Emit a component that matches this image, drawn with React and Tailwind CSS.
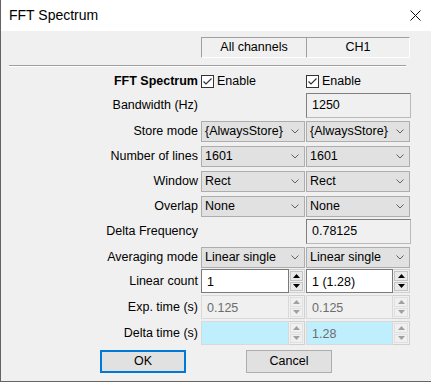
import React from "react";

function Chevron() {
  return (
    <svg width="8" height="5" viewBox="0 0 8 5" className="shrink-0">
      <path d="M0.5 0.5 L4 4 L7.5 0.5" fill="none" stroke="#606060" strokeWidth="1" />
    </svg>
  );
}

function Combo({ value }) {
  return (
    <div className="w-[104px] h-full bg-[#e1e1e1] border border-[#adadad] flex items-center justify-between pl-[3px] pr-[5px]">
      <span className="whitespace-nowrap">{value}</span>
      <Chevron />
    </div>
  );
}

function Check({ label }) {
  return (
    <div className="flex items-center gap-[3px] h-full">
      <div className="w-[13px] h-[13px] bg-white border border-[#333333] flex items-center justify-center">
        <svg width="11" height="11" viewBox="0 0 11 11">
          <path d="M1.5 5.5 L4 8 L9.5 2.5" fill="none" stroke="#333333" strokeWidth="1.2" />
        </svg>
      </div>
      <span>{label}</span>
    </div>
  );
}

function ReadBox({ value }) {
  return (
    <div className="w-[105px] h-full border border-[#7f7f7f] border-r-[#b9b9b9] border-b-[#b9b9b9] pl-[5px] pt-[2px]">
      {value}
    </div>
  );
}

function Arrow({ up, disabled }) {
  return (
    <svg width="7" height="4" viewBox="0 0 7 4">
      <path d={up ? "M0 4 L3.5 0 L7 4 Z" : "M0 0 L3.5 4 L7 0 Z"} fill={disabled ? "#a0a0a0" : "#000000"} />
    </svg>
  );
}

function Spin({ value, state, editW }) {
  const disabled = state !== "on";
  const editCls =
    state === "on"
      ? "bg-white border border-[#7a7a7a] text-black"
      : state === "off"
      ? "bg-[#f0f0f0] border border-[#d9d9d9] text-[#6d6d6d]"
      : "bg-[#bfeffd] border border-[#d9d9d9] text-[#6d6d6d]";
  const btn = disabled ? "border-[#e0e0e0] bg-[#f0f0f0]" : "border-[#c4c4c4] bg-[#e9e9e9]";
  return (
    <div className="flex h-full w-[104px]">
      <div className={`h-full pl-[5px] pt-[3px] ${editCls}`} style={{ width: editW }}>
        {value}
      </div>
      <div className="flex-1 flex flex-col border border-[#d0d0d0] border-l-0 p-px gap-px">
        <div className={`flex-1 flex items-center justify-center border ${btn}`}>
          <Arrow up disabled={disabled} />
        </div>
        <div className={`flex-1 flex items-center justify-center border ${btn}`}>
          <Arrow disabled={disabled} />
        </div>
      </div>
    </div>
  );
}

function Row({ label, bold, className, children }) {
  return (
    <div className={`grid grid-cols-[200px_105px_105px] ${className}`}>
      <div className={`flex items-center justify-end pr-[3px] whitespace-nowrap ${bold ? "font-bold" : ""}`}>{label}</div>
      {children}
    </div>
  );
}

export default function App() {
  return (
    <div className="w-[431px] h-[382px] bg-[#f0f0f0] border-l border-b border-[#646464] flex flex-col overflow-hidden text-[12.5px] text-black font-['Liberation_Sans',Arial,sans-serif]">
      <div className="h-[31px] shrink-0 bg-white flex items-center justify-between pl-[8px] pr-[10px]">
        <span className="text-[14px]">FFT Spectrum</span>
        <svg width="11" height="11" viewBox="0 0 11 11">
          <path d="M0.5 0.5 L10.5 10.5 M10.5 0.5 L0.5 10.5" stroke="#111111" strokeWidth="1" />
        </svg>
      </div>

      <div className="mt-[6px] h-[17px] grid grid-cols-[200px_105px_105px]">
        <div />
        <div className="border-t border-l border-b border-[#a0a0a0] border-b-white flex items-center justify-center">All channels</div>
        <div className="w-[104px] border border-[#a0a0a0] border-b-white border-r-white flex items-center justify-center">CH1</div>
      </div>

      <div className="mt-[11px] ml-[8px] w-[397px] border-t border-b border-t-[#a0a0a0] border-b-white" />

      <Row label="FFT Spectrum" bold className="mt-[5px] h-[15px]">
        <Check label="Enable" />
        <Check label="Enable" />
      </Row>

      <Row label="Bandwidth (Hz)" className="mt-[6px] h-[25px]">
        <div />
        <ReadBox value="1250" />
      </Row>

      <Row label="Store mode" className="mt-[3px] h-[21px]">
        <Combo value="{AlwaysStore}" />
        <Combo value="{AlwaysStore}" />
      </Row>
      <Row label="Number of lines" className="mt-[4px] h-[21px]">
        <Combo value="1601" />
        <Combo value="1601" />
      </Row>
      <Row label="Window" className="mt-[4px] h-[21px]">
        <Combo value="Rect" />
        <Combo value="Rect" />
      </Row>
      <Row label="Overlap" className="mt-[4px] h-[21px]">
        <Combo value="None" />
        <Combo value="None" />
      </Row>

      <Row label="Delta Frequency" className="mt-[2px] h-[25px]">
        <div />
        <ReadBox value="0.78125" />
      </Row>

      <Row label="Averaging mode" className="mt-[3px] h-[21px]">
        <Combo value="Linear single" />
        <Combo value="Linear single" />
      </Row>

      <Row label="Linear count" className="mt-[1px] h-[24px]">
        <Spin value="1" state="on" editW={88} />
        <Spin value="1 (1.28)" state="on" editW={87} />
      </Row>
      <Row label="Exp. time (s)" className="mt-[2px] h-[24px]">
        <Spin value="0.125" state="off" editW={88} />
        <Spin value="0.125" state="off" editW={87} />
      </Row>
      <Row label="Delta time (s)" className="mt-[2px] h-[24px]">
        <Spin value="" state="cyan" editW={88} />
        <Spin value="1.28" state="cyan" editW={87} />
      </Row>

      <div className="mt-[5px] h-[23px] flex pl-[99px] gap-[60px]">
        <button className="w-[86px] h-full bg-[#e1e1e1] border-2 border-[#0078d7] flex items-center justify-center">OK</button>
        <button className="w-[86px] h-full bg-[#e1e1e1] border border-[#adadad] flex items-center justify-center">Cancel</button>
      </div>
    </div>
  );
}
